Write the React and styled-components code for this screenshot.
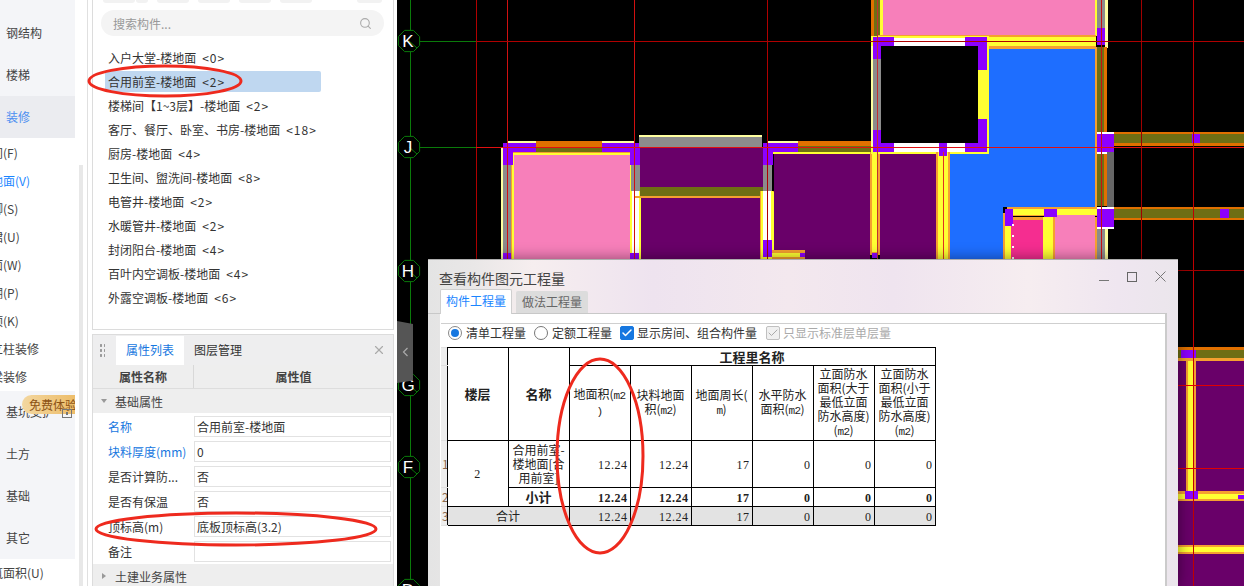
import React from "react";
import styled, { createGlobalStyle } from "styled-components";
import { Check, Search, X } from "lucide-react";

const GlobalStyle = createGlobalStyle`
  html, body {
    margin: 0;
    padding: 0;
    background: #fff;
  }
  * {
    box-sizing: border-box;
  }
`;

const Page = styled.div`
  position: relative;
  width: 1244px;
  height: 586px;
  overflow: hidden;
  display: flex;
  background: #fff;
  color: #333;
  font-family: "Noto Sans CJK SC", "Noto Sans", sans-serif;
  font-size: 12px;
`;

/* left nav */
const Nav = styled.nav`
  position: relative;
  width: 88px;
  height: 586px;
  flex: none;
  border-right: 1px solid #e0e0e0;
  overflow: hidden;
`;
const Category = styled.div`
  position: relative;
  width: 75px;
  height: ${(props) => props.$h || 42}px;
  display: flex;
  align-items: center;
  padding: 0 0 2px 6px;
  background: ${(props) => (props.$active ? "#ebecf0" : "#f4f5f8")};
  color: ${(props) => (props.$active ? "#4d8ff0" : "#444")};
`;
const SubItem = styled.div`
  height: 28px;
  line-height: 28px;
  margin-left: -21px;
  white-space: nowrap;
  color: ${(props) => (props.$active ? "#1a85ff" : "#444")};
`;
const SubList = styled.div`
  padding-top: 1px;
  height: 253px;
`;
const NavScroll = styled.div`
  position: absolute;
  left: 79px;
  top: 165px;
  bottom: 0;
  width: 4px;
  background: #e8e8e8;
`;
const Badge = styled.div`
  position: absolute;
  left: 22px;
  top: 4px;
  width: 53px;
  height: 19px;
  padding-left: 7px;
  line-height: 19px;
  border-radius: 10px 0 0 10px;
  background: linear-gradient(90deg, #f3d7a0, #edbd6a);
  color: #8c5214;
  white-space: nowrap;
  overflow: hidden;
`;
const LockIcon = styled.svg`
  position: absolute;
  left: 62px;
  top: 17px;
`;

/* middle column */
const Middle = styled.div`
  width: 305px;
  height: 586px;
  flex: none;
  padding-left: 4px;
  display: flex;
  flex-direction: column;
  gap: 4px;
`;
const ListPanel = styled.section`
  height: 330px;
  flex: none;
  width: 302px;
  border: 1px solid #dcdcdc;
  border-top: 0;
  padding: 0 9px 0 8px;
`;
const TopButtons = styled.div`
  display: flex;
  height: 3px;
  margin: 0 0 7px 2px;
`;
const TopButton = styled.div`
  width: ${(props) => props.$w}px;
  margin-right: ${(props) => props.$gap}px;
  background: #f2f2f2;
  border-radius: 0 0 3px 3px;
`;
const SearchBox = styled.div`
  height: 26px;
  border-radius: 13px;
  background: #f4f4f4;
  display: flex;
  align-items: center;
  justify-content: space-between;
  padding: 0 12px;
  color: #999;
`;
const ComponentList = styled.div`
  margin-top: 11px;
`;
const ComponentRow = styled.div`
  width: 216px;
  height: 21px;
  margin: 0 0 3px 4px;
  padding-left: 3px;
  display: flex;
  align-items: center;
  border-radius: 2px;
  white-space: pre;
  color: #333;
  background: ${(props) => (props.$active ? "#bfd7f0" : "transparent")};
`;
const Count = styled.span`
  margin-left: 6px;
  letter-spacing: 1px;
`;
const PropsPanel = styled.section`
  width: 302px;
  flex: 1;
  border: 1px solid #dcdcdc;
  border-bottom: 0;
  overflow: hidden;
`;
const PropsTabs = styled.div`
  height: 30px;
  display: flex;
  align-items: flex-end;
  background: #eeeeef;
  padding-left: 6px;
  position: relative;
`;
const Handle = styled.div`
  width: 6px;
  height: 14px;
  margin: 0 11px 8px 0;
  background-image: radial-gradient(circle, #999 1.1px, transparent 1.3px);
  background-size: 4px 5px;
`;
const PropTab = styled.div`
  width: 68px;
  height: 29px;
  line-height: 27px;
  text-align: center;
  margin-right: 0;
  background: ${(props) => (props.$active ? "#fff" : "transparent")};
  color: ${(props) => (props.$active ? "#1677e0" : "#333")};
`;
const PanelClose = styled(X)`
  position: absolute;
  right: 7px;
  top: 8px;
  color: #aaa;
`;
const PropsHead = styled.div`
  display: grid;
  grid-template-columns: 100px 1fr;
  height: 24px;
  background: #eee;
  border-bottom: 1px solid #ddd;
  font-weight: 700;
  color: #444;
  text-align: center;
  line-height: 23px;
`;
const HeadCell = styled.div`
  border-left: ${(props) => (props.$split ? "1px solid #d8d8d8" : "0")};
`;
const Group = styled.div`
  height: 24px;
  background: #eee;
  display: flex;
  align-items: center;
  gap: 8px;
  padding-left: 8px;
  color: #444;
`;
const Arrow = styled.span`
  width: 0;
  height: 0;
  border-style: solid;
  border-color: transparent;
  ${(props) =>
    props.$open
      ? "border-width: 4px 3px 0 3px; border-top-color: #999;"
      : "border-width: 3px 0 3px 4px; border-left-color: #999; margin-left: 1px; margin-right: 1px;"}
`;
const PropRows = styled.div`
  padding-top: 1px;
`;
const PropRow = styled.div`
  display: grid;
  grid-template-columns: 101px 197px;
  height: 25px;
  align-items: center;
`;
const PropLabel = styled.div`
  padding-left: 15px;
  white-space: nowrap;
  color: ${(props) => (props.$link ? "#1677e0" : "#333")};
`;
const PropValue = styled.div`
  height: 21px;
  line-height: 19px;
  border: 1px solid #e2e2e2;
  padding-left: 2px;
`;

/* cad canvas */
const Cad = styled.div`
  position: relative;
  flex: 1;
  height: 586px;
  margin-left: 4px;
  background: #000;
`;
const CadDrawing = styled.svg`
  display: block;
`;
const CollapseTab = styled.div`
  position: absolute;
  left: 0;
  top: 321px;
  width: 16px;
  height: 62px;
  background: #555;
  clip-path: polygon(0 0, 100% 5%, 100% 96%, 0 100%);
  display: flex;
  align-items: center;
  justify-content: center;
`;

/* dialog */
const Dialog = styled.div`
  position: absolute;
  left: 428px;
  top: 259px;
  width: 750px;
  height: 327px;
  display: flex;
  flex-direction: column;
  border-top: 1px solid #aeaeae;
  background: linear-gradient(
    90deg,
    #e4e4e4 0,
    #e9e7e7 6%,
    #f6eeef 14%,
    #eee3ef 30%,
    #f3e8ee 48%,
    #efe4ef 62%,
    #f6edf0 80%,
    #efe6f0 92%,
    #ebe6ec 100%
  );
  box-shadow: 0 0 14px rgba(0, 0, 0, 0.45);
  color: #333;
`;
const TitleBar = styled.div`
  height: 29px;
  flex: none;
  display: flex;
  align-items: center;
  justify-content: space-between;
  padding: 6px 12px 0 11px;
  font-size: 14px;
  color: #444;
`;
const WindowButtons = styled.div`
  display: flex;
  align-items: center;
  gap: 18px;
  margin-top: -2px;
`;
const DialogTabs = styled.div`
  height: 25px;
  flex: none;
  display: flex;
  align-items: flex-end;
  gap: 4px;
  margin-right: 11px;
  padding-left: 12px;
  border-bottom: 1px solid #c8c8c8;
`;
const DialogTab = styled.div`
  width: 72px;
  height: ${(props) => (props.$active ? 25 : 22)}px;
  line-height: ${(props) => (props.$active ? 22 : 21)}px;
  text-align: center;
  color: ${(props) => (props.$active ? "#1a85ff" : "#666")};
  background: ${(props) => (props.$active ? "#fff" : "#dcdcdc")};
  border: ${(props) => (props.$active ? "1px solid #cfcfcf" : "0")};
  border-bottom: 0;
  border-radius: 2px 2px 0 0;
  margin-bottom: ${(props) => (props.$active ? -1 : 0)}px;
  position: relative;
`;
const DialogBody = styled.div`
  flex: 1;
  width: 727px;
  margin-left: 12px;
  padding-top: 9px;
  background: #fff;
  border-right: 2px solid #cbcbcb;
`;
const BodyInner = styled.div`
  height: 100%;
  margin-left: 1px;
  border-top: 1px solid #cfcfcf;
`;
const Options = styled.div`
  height: 23px;
  display: flex;
  align-items: center;
  padding: 0 0 6px 7px;
`;
const Radio = styled.span`
  width: 14px;
  height: 14px;
  flex: none;
  margin-right: 4px;
  border-radius: 50%;
  border: 1px solid ${(props) => (props.$on ? "#888" : "#777")};
  display: flex;
  align-items: center;
  justify-content: center;
  &::after {
    content: "";
    width: 8px;
    height: 8px;
    border-radius: 50%;
    background: ${(props) => (props.$on ? "#1677e0" : "transparent")};
  }
`;
const Box = styled.span`
  width: 14px;
  height: 14px;
  flex: none;
  margin-right: 3px;
  border-radius: 2px;
  display: flex;
  align-items: center;
  justify-content: center;
  background: ${(props) => (props.$off ? "#f0f0f0" : "#1677e0")};
  border: 1px solid ${(props) => (props.$off ? "#c0c0c0" : "#1677e0")};
  color: ${(props) => (props.$off ? "#aaa" : "#fff")};
`;
const OptionLabel = styled.span`
  margin-right: ${(props) => props.$gap}px;
  color: ${(props) => (props.$off ? "#aaa" : "#333")};
  white-space: nowrap;
`;
const QtyTable = styled.table`
  border-collapse: collapse;
  table-layout: fixed;
  width: 494px;
  line-height: 14px;
  color: #222;
`;
const RowNo = styled.td`
  padding: 0;
  background: #eee;
  border: 1px solid #e0e0e0;
  border-left: 0;
  border-right: 1px solid #000;
  color: #8a6a50;
  font-size: 12px;
  overflow: hidden;
  text-align: left;
  padding-left: 1px;
`;
const Cell = styled.td`
  padding: 0 2px;
  border: 1px solid #000;
  text-align: ${(props) => props.$align || "center"};
  font-size: ${(props) => (props.$bold ? 13 : 12)}px;
  font-weight: ${(props) => (props.$bold ? 700 : 400)};
  background: ${(props) => (props.$total ? "#e3e3e3" : "#fff")};
  overflow: hidden;
`;
const Qty = styled.span`
  font-family: "Liberation Serif", serif;
  font-size: 12px;
  letter-spacing: 0.5px;
  font-weight: inherit;
`;
const Unit = styled.span`
  font-family: "Liberation Mono", monospace;
  font-size: 11px;
  letter-spacing: -0.6px;
`;

const Overlay = styled.svg`
  position: absolute;
  left: 0;
  top: 0;
  pointer-events: none;
`;

const P = "#8c00ff";
const V = "#690069";
const O = "#6e6e14";
const A = "#e07000";
const Y = "#ffff33";
const E = "#f5a030";
const G = "#8c8c8c";
const W = "#ffffff";
const K = "#f77fba";
const M = "#f52d90";
const B = "#1e6eff";
const L = "#ffffa0";

// x, y, w, h, fill in page coordinates
const walls = [
  // left pink room
  [501, 147, 2, 112, L],
  [503, 165, 8, 94, G],
  [507, 141, 127, 2, L],
  [503, 143, 33, 9, P],
  [602, 143, 32, 9, P],
  [536, 141, 66, 6, A],
  [536, 147, 66, 5, O],
  [511, 152, 123, 107, E],
  [512, 153, 121, 106, Y],
  [514, 155, 116, 104, K],
  [503, 143, 10, 22, P],
  [503, 253, 8, 6, P],
  [630, 143, 10, 22, P],
  [631, 165, 9, 26, G],
  [630, 191, 11, 68, Y],
  [632, 191, 7, 68, W],
  [630, 253, 9, 6, P],
  // middle room
  [639, 135, 123, 2, L],
  [639, 137, 123, 10, G],
  [640, 147, 123, 40, V],
  [640, 187, 123, 9, O],
  [634, 196, 133, 2, E],
  [641, 198, 121, 61, V],
  // right of middle room
  [768, 141, 30, 2, L],
  [774, 152, 96, 107, V],
  [771, 152, 100, 2, Y],
  [798, 141, 73, 5, A],
  [798, 146, 73, 6, O],
  [763, 143, 35, 9, P],
  [763, 143, 10, 22, P],
  [763, 165, 9, 26, G],
  [760, 191, 14, 68, E],
  [761, 191, 12, 68, Y],
  [763, 191, 8, 49, W],
  [771, 192, 3, 60, Y],
  [763, 240, 9, 17, P],
  [772, 250, 33, 9, E],
  [772, 253, 28, 4, Y],
  [800, 253, 5, 4, P],
  [870, 152, 10, 103, E],
  [872, 152, 6, 100, Y],
  [872, 253, 5, 5, P],
  [880, 154, 58, 105, V],
  // top pink room
  [883, 0, 212, 36, K],
  [871, 0, 3, 36, A],
  [874, 0, 6, 36, O],
  [880, 0, 3, 36, Y],
  [1095, 0, 2, 36, Y],
  [1097, 0, 8, 28, G],
  [1105, 0, 3, 48, L],
  [1097, 28, 8, 17, P],
  [877, 35, 219, 13, E],
  [879, 37, 217, 9, Y],
  // blue room
  [987, 47, 110, 100, E],
  [949, 147, 148, 60, E],
  [989, 49, 106, 98, B],
  [950, 147, 145, 60, B],
  [950, 207, 53, 52, B],
  [1095, 47, 2, 160, E],
  // black room
  [871, 36, 118, 118, Y],
  [871, 46, 2, 100, L],
  [881, 46, 97, 97, "#000"],
  [894, 38, 71, 8, W],
  [894, 143, 71, 9, W],
  [873, 59, 8, 71, G],
  [978, 70, 9, 49, Y],
  [873, 37, 21, 9, P],
  [873, 37, 8, 22, P],
  [965, 37, 22, 9, P],
  [978, 37, 9, 33, P],
  [873, 130, 8, 22, P],
  [873, 143, 21, 9, P],
  [978, 119, 9, 33, P],
  [965, 143, 22, 9, P],
  [936, 152, 14, 107, E],
  [938, 152, 10, 107, Y],
  [939, 143, 8, 13, P],
  // right wall
  [1097, 47, 7, 85, O],
  [1104, 47, 3, 85, A],
  [1097, 132, 17, 22, W],
  [1097, 134, 17, 18, P],
  [1097, 154, 7, 52, O],
  [1104, 154, 3, 52, A],
  [1107, 152, 7, 55, "#666666"],
  [1097, 207, 17, 22, W],
  [1097, 209, 17, 18, P],
  [1097, 229, 8, 30, G],
  [1105, 229, 3, 30, L],
  // beams to the right
  [1114, 132, 130, 14, A],
  [1114, 134, 130, 9, O],
  [1192, 134, 8, 9, P],
  [1114, 207, 130, 13, A],
  [1114, 209, 130, 9, O],
  [1220, 209, 9, 9, P],
  // small room
  [1007, 207, 90, 9, E],
  [1013, 209, 84, 6, Y],
  [1003, 213, 8, 46, E],
  [1005, 226, 6, 33, Y],
  [1011, 217, 86, 42, E],
  [1011, 220, 32, 39, M],
  [1043, 217, 10, 42, Y],
  [1055, 215, 40, 44, K],
  [1005, 209, 8, 17, P],
  [1044, 209, 13, 8, P],
  [1012, 224, 2, 2, W],
  [1012, 235, 2, 2, W],
  [1012, 246, 2, 2, W],
  [1012, 257, 2, 2, W],
  // strip right of the dialog
  [1178, 347, 66, 3, A],
  [1178, 350, 66, 8, O],
  [1178, 358, 66, 3, E],
  [1181, 350, 15, 8, P],
  [1178, 361, 66, 225, V],
  [1186, 361, 10, 130, E],
  [1188, 361, 6, 130, Y],
  [1178, 491, 66, 10, E],
  [1178, 494, 66, 5, Y],
  [1185, 491, 13, 8, P],
  [1238, 495, 6, 4, P],
  [1178, 545, 66, 9, E],
  [1178, 547, 66, 5, Y],
];

const redLines = [
  [476, 0, 1, 259, "#b00000"],
  [507, 0, 1, 259, "#d01010"],
  [634, 0, 1, 259, "#d01010"],
  [767, 0, 1, 259, "#b00000"],
  [877, 0, 1, 259, "#c03030"],
  [943, 152, 1, 107, "#e03020"],
  [1101, 0, 1, 259, "#c81010"],
  [1141, 0, 1, 270, "#a00000"],
  [1193, 0, 1, 586, "#c00000"],
  [476, 41, 768, 1, "#b00000"],
  [476, 147, 768, 1, "#e01010"],
  [1178, 270, 66, 1, "#a00000"],
  [1178, 385, 66, 1, "#e00000"],
  [1178, 468, 66, 1, "#e00000"],
];

const axes = [
  ["K", 41],
  ["J", 147],
  ["H", 271],
  ["G", 385],
  ["F", 467],
  ["D", 590],
];

const octagon = (cx, cy, r) =>
  Array.from({ length: 8 }, (_, i) => {
    const a = Math.PI / 8 + (i * Math.PI) / 4;
    return `${cx + r * Math.cos(a)},${cy + r * Math.sin(a)}`;
  }).join(" ");

const CadPlan = () => (
  <CadDrawing width="847" height="586" viewBox="397 0 847 586" shapeRendering="crispEdges">
    <rect x="410" y="0" width="1" height="586" fill="#0a7a0a" />
    <rect x="410" y="41" width="66" height="1" fill="#0a7a0a" />
    <rect x="410" y="147" width="66" height="1" fill="#0a7a0a" />
    {walls.map(([x, y, w, h, fill], i) => (
      <rect key={i} x={x} y={y} width={w} height={h} fill={fill} />
    ))}
    {redLines.map(([x, y, w, h, fill], i) => (
      <rect key={i} x={x} y={y} width={w} height={h} fill={fill} />
    ))}
    {axes.map(([name, y]) => (
      <g key={name} shapeRendering="auto">
        <polygon points={octagon(409, y, 11.5)} fill="#000" stroke="#0a7a0a" strokeWidth="1" />
        <line x1="409" y1={y} x2="417" y2={y + 7} stroke="#0a7a0a" />
        <text
          x="408"
          y={y + 6}
          fill="#fff"
          fontSize="17"
          textAnchor="middle"
          fontFamily="'Liberation Sans', sans-serif"
        >
          {name}
        </text>
      </g>
    ))}
  </CadDrawing>
);

const components = [
  ["入户大堂-楼地面", "<0>"],
  ["合用前室-楼地面", "<2>"],
  ["楼梯间【1~3层】-楼地面", "<2>"],
  ["客厅、餐厅、卧室、书房-楼地面", "<18>"],
  ["厨房-楼地面", "<4>"],
  ["卫生间、盥洗间-楼地面", "<8>"],
  ["电管井-楼地面", "<2>"],
  ["水暖管井-楼地面", "<2>"],
  ["封闭阳台-楼地面", "<4>"],
  ["百叶内空调板-楼地面", "<4>"],
  ["外露空调板-楼地面", "<6>"],
];

const props_ = [
  { label: "名称", value: "合用前室-楼地面", link: true },
  { label: "块料厚度(mm)", value: "0", link: true },
  { label: "是否计算防...", value: "否" },
  { label: "是否有保温", value: "否" },
  { label: "顶标高(m)", value: "底板顶标高(3.2)" },
  { label: "备注", value: "" },
];

const subItems = ["房间(F)", "楼地面(V)", "踢脚(S)", "墙裙(U)", "墙面(W)", "天棚(P)", "吊顶(K)", "独立柱装修", "单梁装修"];

const amounts = ["12.24", "12.24", "17", "0", "0", "0"];

const App = () => (
  <Page>
    <GlobalStyle />
    <Nav>
      <Category $h={12} />
      <Category>钢结构</Category>
      <Category>楼梯</Category>
      <Category $active>装修</Category>
      <SubList>
        {subItems.map((item) => (
          <SubItem key={item} $active={item === "楼地面(V)"}>
            {item}
          </SubItem>
        ))}
      </SubList>
      <Category>
        基坑支护
        <Badge>免费体验</Badge>
        <LockIcon width="10" height="10" viewBox="0 0 10 10">
          <rect x="0.5" y="1.5" width="9" height="8" fill="none" stroke="#777" />
          <rect x="4" y="4" width="2" height="3" fill="#777" />
        </LockIcon>
      </Category>
      <Category>土方</Category>
      <Category>基础</Category>
      <Category>其它</Category>
      <SubItem>建筑面积(U)</SubItem>
      <NavScroll />
    </Nav>

    <Middle>
      <ListPanel>
        <TopButtons>
          <TopButton $w={32} $gap={1} />
          <TopButton $w={12} $gap={9} />
          <TopButton $w={32} $gap={9} />
          <TopButton $w={32} $gap={9} />
          <TopButton $w={32} $gap={9} />
          <TopButton $w={32} $gap={45} />
          <TopButton $w={25} $gap={0} />
        </TopButtons>
        <SearchBox>
          搜索构件...
          <Search size={13} color="#aaa" />
        </SearchBox>
        <ComponentList>
          {components.map(([name, count], i) => (
            <ComponentRow key={name} $active={i === 1}>
              {name}
              <Count>{count}</Count>
            </ComponentRow>
          ))}
        </ComponentList>
      </ListPanel>
      <PropsPanel>
        <PropsTabs>
          <Handle />
          <PropTab $active>属性列表</PropTab>
          <PropTab>图层管理</PropTab>
          <PanelClose size={14} />
        </PropsTabs>
        <PropsHead>
          <HeadCell>属性名称</HeadCell>
          <HeadCell $split>属性值</HeadCell>
        </PropsHead>
        <Group>
          <Arrow $open />
          基础属性
        </Group>
        <PropRows>
          {props_.map((row) => (
            <PropRow key={row.label}>
              <PropLabel $link={row.link}>{row.label}</PropLabel>
              <PropValue>{row.value}</PropValue>
            </PropRow>
          ))}
        </PropRows>
        <Group>
          <Arrow />
          土建业务属性
        </Group>
      </PropsPanel>
    </Middle>

    <Cad>
      <CadPlan />
      <CollapseTab>
        <svg width="7" height="10" viewBox="0 0 7 10">
          <path d="M5.5 1 L1.5 5 L5.5 9" fill="none" stroke="#aaa" strokeWidth="1.2" />
        </svg>
      </CollapseTab>
    </Cad>

    <Dialog>
      <TitleBar>
        查看构件图元工程量
        <WindowButtons>
          <svg width="10" height="10" viewBox="0 0 10 10">
            <rect x="0" y="8" width="10" height="1" fill="#777" />
          </svg>
          <svg width="10" height="10" viewBox="0 0 10 10">
            <rect x="0.5" y="0.5" width="9" height="9" fill="none" stroke="#666" />
          </svg>
          <svg width="11" height="11" viewBox="0 0 11 11">
            <path d="M0.5 0.5 L10.5 10.5 M10.5 0.5 L0.5 10.5" stroke="#777" />
          </svg>
        </WindowButtons>
      </TitleBar>
      <DialogTabs>
        <DialogTab $active>构件工程量</DialogTab>
        <DialogTab>做法工程量</DialogTab>
      </DialogTabs>
      <DialogBody>
        <BodyInner>
          <Options>
            <Radio $on />
            <OptionLabel $gap={8}>清单工程量</OptionLabel>
            <Radio />
            <OptionLabel $gap={8}>定额工程量</OptionLabel>
            <Box>
              <Check size={12} strokeWidth={3} />
            </Box>
            <OptionLabel $gap={9}>显示房间、组合构件量</OptionLabel>
            <Box $off>
              <Check size={12} strokeWidth={2} />
            </Box>
            <OptionLabel $off>只显示标准层单层量</OptionLabel>
          </Options>
          <QtyTable>
            <colgroup>
              <col width="6" />
              <col width="61" />
              <col width="61" />
              {amounts.map((_, i) => (
                <col key={i} width="61" />
              ))}
            </colgroup>
            <tbody>
              <tr style={{ height: 18 }}>
                <RowNo rowSpan={1} />
                <Cell rowSpan={2} $bold>楼层</Cell>
                <Cell rowSpan={2} $bold>名称</Cell>
                <Cell colSpan={6} $bold>工程里名称</Cell>
              </tr>
              <tr style={{ height: 75 }}>
                <RowNo />
                <Cell>地面积(<Unit>m2</Unit><br /><Unit>)</Unit></Cell>
                <Cell>块料地面<br />积(<Unit>m2</Unit>)</Cell>
                <Cell>地面周长(<br /><Unit>m</Unit>)</Cell>
                <Cell>水平防水<br />面积(<Unit>m2</Unit>)</Cell>
                <Cell>立面防水<br />面积(大于<br />最低立面<br />防水高度)<br />(<Unit>m2</Unit>)</Cell>
                <Cell>立面防水<br />面积(小于<br />最低立面<br />防水高度)<br />(<Unit>m2</Unit>)</Cell>
              </tr>
              <tr style={{ height: 47 }}>
                <RowNo>1</RowNo>
                <Cell rowSpan={2}><Qty>2</Qty></Cell>
                <Cell>合用前室-<br />楼地面[合<br />用前室]</Cell>
                {amounts.map((v, i) => (
                  <Cell key={i} $align="right"><Qty>{v}</Qty></Cell>
                ))}
              </tr>
              <tr style={{ height: 19 }}>
                <RowNo>2</RowNo>
                <Cell $bold>小计</Cell>
                {amounts.map((v, i) => (
                  <Cell key={i} $align="right" $bold><Qty>{v}</Qty></Cell>
                ))}
              </tr>
              <tr style={{ height: 19 }}>
                <RowNo>3</RowNo>
                <Cell colSpan={2} $total>合计</Cell>
                {amounts.map((v, i) => (
                  <Cell key={i} $align="right" $total><Qty>{v}</Qty></Cell>
                ))}
              </tr>
            </tbody>
          </QtyTable>
        </BodyInner>
      </DialogBody>
    </Dialog>

    <Overlay width="1244" height="586" viewBox="0 0 1244 586" fill="none" stroke="#ee2a1e" strokeWidth="3">
      <ellipse cx="165" cy="81" rx="76" ry="15" />
      <ellipse cx="236" cy="529" rx="140" ry="16" />
      <ellipse cx="600" cy="456" rx="43" ry="97" />
    </Overlay>
  </Page>
);

export default App;
